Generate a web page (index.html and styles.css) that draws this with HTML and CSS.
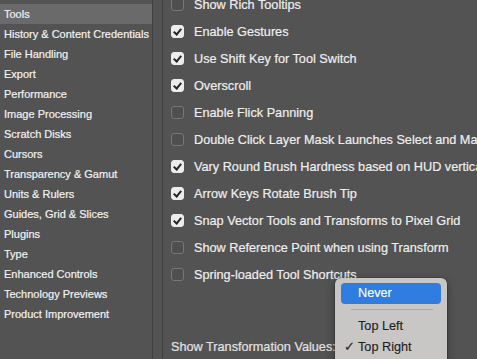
FILE: index.html
```html
<!DOCTYPE html>
<html>
<head>
<meta charset="utf-8">
<link rel="stylesheet" href="styles.css">
</head>
<body>
<div class="window">
  <nav class="sidebar">
    <div class="nav-item selected">Tools</div>
    <div class="nav-item">History &amp; Content Credentials</div>
    <div class="nav-item">File Handling</div>
    <div class="nav-item">Export</div>
    <div class="nav-item">Performance</div>
    <div class="nav-item">Image Processing</div>
    <div class="nav-item">Scratch Disks</div>
    <div class="nav-item">Cursors</div>
    <div class="nav-item">Transparency &amp; Gamut</div>
    <div class="nav-item">Units &amp; Rulers</div>
    <div class="nav-item">Guides, Grid &amp; Slices</div>
    <div class="nav-item">Plugins</div>
    <div class="nav-item">Type</div>
    <div class="nav-item">Enhanced Controls</div>
    <div class="nav-item">Technology Previews</div>
    <div class="nav-item">Product Improvement</div>
  </nav>
  <div class="gutter"></div>
  <main class="panel">
    <div class="options">
      <label class="opt"><span class="box"></span>Show Rich Tooltips</label>
      <label class="opt"><span class="box on"></span>Enable Gestures</label>
      <label class="opt"><span class="box on"></span>Use Shift Key for Tool Switch</label>
      <label class="opt"><span class="box on"></span>Overscroll</label>
      <label class="opt"><span class="box"></span>Enable Flick Panning</label>
      <label class="opt"><span class="box"></span>Double Click Layer Mask Launches Select and Mask</label>
      <label class="opt"><span class="box on"></span>Vary Round Brush Hardness based on HUD vertical movement</label>
      <label class="opt"><span class="box on"></span>Arrow Keys Rotate Brush Tip</label>
      <label class="opt"><span class="box on"></span>Snap Vector Tools and Transforms to Pixel Grid</label>
      <label class="opt"><span class="box"></span>Show Reference Point when using Transform</label>
      <label class="opt"><span class="box"></span>Spring-loaded Tool Shortcuts</label>
    </div>
    <div class="transform-row">Show Transformation Values:</div>
  </main>
  <div class="menu">
    <div class="menu-item active">Never</div>
    <div class="menu-sep"></div>
    <div class="menu-item">Top Left</div>
    <div class="menu-item checked"><span class="mark">✓</span>Top Right</div>
  </div>
</div>
</body>
</html>
```
FILE: styles.css
```css
html, body {
  margin: 0;
  padding: 0;
  background: #535353;
  overflow: hidden;
}
.window {
  position: relative;
  display: flex;
  width: 477px;
  height: 359px;
  overflow: hidden;
  font-family: "Liberation Sans", Arial, sans-serif;
  color: #ececec;
  -webkit-text-stroke: 0.2px;
}
.sidebar {
  width: 152px;
  flex: none;
  border-right: 1px solid #424242;
  padding-top: 4px;
}
.nav-item {
  height: 20px;
  line-height: 20px;
  padding-left: 4px;
  font-size: 11px;
  white-space: nowrap;
  color: #f2f2f2;
}
.nav-item.selected {
  background: #6a6a6a;
}
.gutter {
  width: 9px;
  flex: none;
}
.panel {
  flex: 1;
  border-left: 1px solid #424242;
  display: flex;
  flex-direction: column;
  padding-left: 8px;
}
.options {
  margin-top: -9px;
  display: flex;
  flex-direction: column;
}
.opt {
  height: 27px;
  display: flex;
  align-items: center;
  font-size: 12.7px;
  white-space: nowrap;
  color: #eeeeee;
}
.box {
  width: 11px;
  height: 11px;
  border: 1px solid #777777;
  border-radius: 3px;
  background: #4f4f4f;
  margin-right: 10px;
  flex: none;
  position: relative;
}
.box.on {
  background: #ececec;
  border-color: #ececec;
}
.box.on::after {
  content: "";
  position: absolute;
  left: 3px;
  top: 1px;
  width: 3px;
  height: 6px;
  border: solid #262626;
  border-width: 0 2px 2px 0;
  transform: rotate(40deg);
}
.transform-row {
  margin-top: 51px;
  line-height: 16px;
  font-size: 12.7px;
  color: #e2e2e2;
  white-space: nowrap;
}
.menu {
  position: absolute;
  left: 335px;
  top: 278px;
  width: 112px;
  height: 100px;
  background: #c9c7c5;
  border-radius: 6px;
  box-shadow: 0 3px 10px rgba(0,0,0,0.35), 0 0 0 0.5px rgba(0,0,0,0.3);
  padding: 5px 6px;
  box-sizing: border-box;
  font-size: 12.7px;
  color: #1e1e1e;
  -webkit-text-stroke: 0.15px;
}
.menu-item {
  height: 21px;
  line-height: 21px;
  padding-left: 17px;
  border-radius: 4px;
  position: relative;
}
.menu-item.active {
  background: #2f7de1;
  color: #ffffff;
}
.menu-sep {
  height: 1px;
  background: #aaa8a6;
  margin: 5px 8px 6px 10px;
}
.mark {
  position: absolute;
  left: 3px;
}
```
